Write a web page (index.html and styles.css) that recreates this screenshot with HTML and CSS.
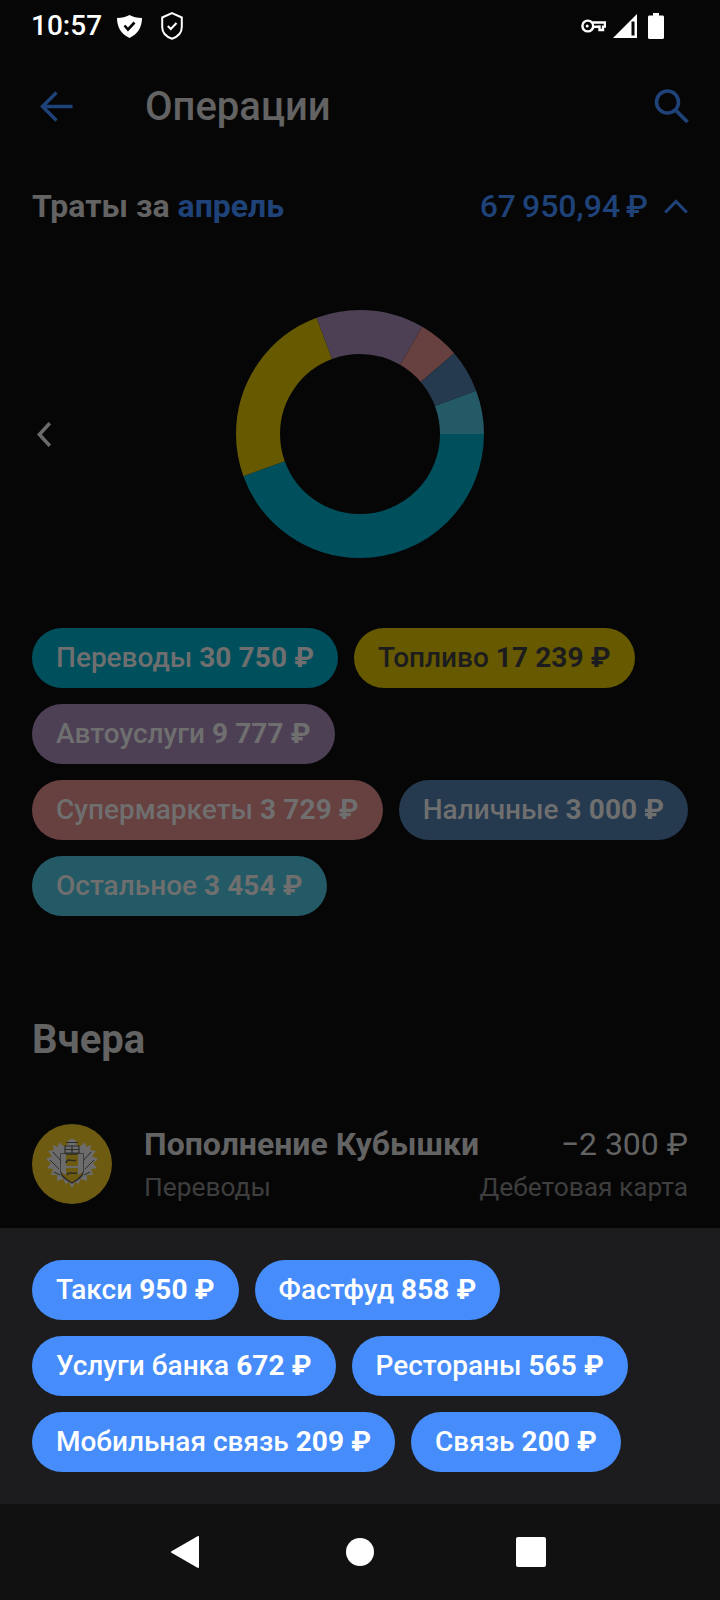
FILE: index.html
```html
<!DOCTYPE html>
<html lang="ru">
<head>
<meta charset="utf-8">
<title>Операции</title>
<link rel="stylesheet" href="styles.css">
</head>
<body>
<div class="screen">
  <main class="main">
    <div class="status">
      <div class="status-left">
        <span class="clock">10:57</span>
        <svg class="ic-shield-fill" viewBox="0 0 25 23"><path fill="#fff" fill-rule="evenodd" d="M12.5 0C16 2 20 3 25 3C25 12 21 19 12.5 23C4 19 0 12 0 3C5 3 9 2 12.5 0Z"/><path fill="none" stroke="#060606" stroke-width="2.6" d="M7.5 10.5L11 14.5L17.5 7.5"/></svg>
        <svg class="ic-shield-line" viewBox="0 0 22 28"><path fill="none" stroke="#fff" stroke-width="2" d="M11 1.2L20.8 5.5V15C20.8 21 16 25 11 26.8C6 25 1.2 21 1.2 15V5.5Z"/><path fill="none" stroke="#fff" stroke-width="2" d="M6.8 14L9.8 17L15.5 11"/></svg>
      </div>
      <div class="status-right">
        <svg class="ic-key" viewBox="0 0 25 14"><path fill="none" stroke="#fff" stroke-width="2.4" d="M11.5 3.5H24V7.6H22V11H18.5V7.6L12 8"/><circle cx="6.8" cy="7" r="5.4" fill="none" stroke="#fff" stroke-width="2.4"/><circle cx="6.2" cy="7" r="1.5" fill="#fff"/></svg>
        <svg class="ic-signal" viewBox="0 0 24 24"><path fill="#fff" d="M24 0V24H0Z"/><path fill="#060606" d="M18.5 7.5H21.5V21.5H18.5Z"/></svg>
        <svg class="ic-battery" viewBox="0 0 16 26"><path fill="#fff" d="M5 0H11V2.5H14.5C15.4 2.5 16 3.1 16 4V24.500C16 25.400 15.400 26 14.500 26H1.500C.6 26 0 25.400 0 24.500V4C0 3.100.6 2.500 1.500 2.500H5Z"/></svg>
      </div>
    </div>

    <header class="header">
      <svg class="ic-back" viewBox="0 0 33 31"><path fill="none" stroke="#1f4279" stroke-width="3.400" d="M32.500 15.500H3M16.500 1.500L2.500 15.500L16.500 29.500"/></svg>
      <h1 class="title">Операции</h1>
      <svg class="ic-search" viewBox="0 0 35 34"><circle cx="13.500" cy="13" r="11" fill="none" stroke="#1f4279" stroke-width="3.600"/><path stroke="#1f4279" stroke-width="3.800" d="M21.500 21L33.500 33"/></svg>
    </header>

    <div class="summary">
      <div class="summary-label">Траты за <span class="accent">апрель</span></div>
      <div class="summary-total">
        <span class="amount">67 950,94 ₽</span>
        <svg class="ic-up" viewBox="0 0 24 15"><path fill="none" stroke="#1f4279" stroke-width="3.200" d="M1.200 13.500L12 2.500L22.800 13.500"/></svg>
      </div>
    </div>

    <div class="chart-row">
      <svg class="ic-prev" viewBox="0 0 14 25"><path fill="none" stroke="#6a6a6a" stroke-width="3.600" d="M12.800 1.200L2.400 12.500L12.800 23.800"/></svg>
      <svg class="donut" viewBox="0 0 248 248">
        <circle class="seg" cx="124" cy="124" r="102" pathLength="360" stroke="#004f5d" stroke-dasharray="160.100 360"/>
        <circle class="seg" cx="124" cy="124" r="102" pathLength="360" stroke="#665900" stroke-dasharray="89.400 360" stroke-dashoffset="-160.100"/>
        <circle class="seg" cx="124" cy="124" r="102" pathLength="360" stroke="#4d4055" stroke-dasharray="50.700 360" stroke-dashoffset="-249.500"/>
        <circle class="seg" cx="124" cy="124" r="102" pathLength="360" stroke="#674040" stroke-dasharray="19.200 360" stroke-dashoffset="-300.200"/>
        <circle class="seg" cx="124" cy="124" r="102" pathLength="360" stroke="#253a4f" stroke-dasharray="20.100 360" stroke-dashoffset="-319.400"/>
        <circle class="seg" cx="124" cy="124" r="102" pathLength="360" stroke="#245a65" stroke-dasharray="20.500 360" stroke-dashoffset="-339.500"/>
      </svg>
    </div>

    <div class="chips chips-dim">
      <div class="chip c-teal">Переводы <b>30 750 ₽</b></div>
      <div class="chip c-yellow">Топливо <b>17 239 ₽</b></div>
      <div class="chip c-purple">Автоуслуги <b>9 777 ₽</b></div>
      <div class="chip c-red">Супермаркеты <b>3 729 ₽</b></div>
      <div class="chip c-navy">Наличные <b>3 000 ₽</b></div>
      <div class="chip c-sea">Остальное <b>3 454 ₽</b></div>
    </div>

    <h2 class="day">Вчера</h2>

    <div class="op">
      <div class="op-logo">
        <svg viewBox="0 0 54 50" class="crest">
          <path fill="#6c6c6c" d="M27 0C30 0 31.500 2 31 4.500L33 8L37 6L40 3L41 8L46 6L45 11L51 12L47 17L53 20L48 24L52 29L46 30L48 36L42 36L42 42L36 40L33 45L30 43L27 49L24 43L21 45L18 40L12 42L12 36L6 36L8 30L2 29L6 24L1 20L7 17L3 12L9 11L8 6L13 8L14 3L17 6L21 8L23 4.500C22.500 2 24 0 27 0Z"/>
          <path fill="none" stroke="#2c2c28" stroke-width="1" d="M8 13L16 22M46 13L38 22M5 21L14 30M49 21L40 30M9 33L15 36M45 33L39 36M21 3.500H33"/>
          <path fill="#6c6c6c" stroke="#2c2c28" stroke-width="1.200" d="M20 7H34V14H20Z"/>
          <path fill="none" stroke="#2c2c28" stroke-width="1.200" d="M27 7V14M20 10.500H34"/>
          <path fill="#6e5b12" stroke="#2c2c28" stroke-width="1.400" d="M16 15H38V33C38 38 32 41 27 44C22 41 16 38 16 33Z"/>
          <path fill="#6c6c6c" d="M16 15H21V36L16 33ZM33 15H38V33L33 36ZM16 27H38V29H16Z"/>
          <path fill="none" stroke="#2c2c28" stroke-width="1.600" d="M21 24C22 19 25 22 31 21.500M22 36C23 32 27 35 32 34"/>
        </svg>
      </div>
      <div class="op-body">
        <div class="op-line">
          <span class="op-name">Пополнение Кубышки</span>
          <span class="op-sum">−2 300 ₽</span>
        </div>
        <div class="op-line">
          <span class="op-sub">Переводы</span>
          <span class="op-sub">Дебетовая карта</span>
        </div>
      </div>
    </div>
  </main>

  <section class="sheet">
    <div class="chips">
      <div class="chip c-blue">Такси <b>950 ₽</b></div>
      <div class="chip c-blue">Фастфуд <b>858 ₽</b></div>
      <div class="chip c-blue">Услуги банка <b>672 ₽</b></div>
      <div class="chip c-blue">Рестораны <b>565 ₽</b></div>
      <div class="chip c-blue">Мобильная связь <b>209 ₽</b></div>
      <div class="chip c-blue">Связь <b>200 ₽</b></div>
    </div>
  </section>

  <nav class="nav">
    <svg class="nav-back" viewBox="0 0 28 32"><path fill="#fff" stroke="#fff" stroke-width="2" stroke-linejoin="round" d="M27 1V31L1 16Z"/></svg>
    <span class="nav-home"></span>
    <span class="nav-recent"></span>
  </nav>
</div>
</body>
</html>
```
FILE: styles.css
```css
* { box-sizing: border-box; }
html, body { margin: 0; padding: 0; background: #060606; }
body { font-family: Roboto, "Noto Sans", sans-serif; }

.screen { width: 720px; height: 1600px; display: flex; flex-direction: column; overflow: hidden; }
.main { flex: 1; min-height: 0; overflow: hidden; background: #060606; }

.status { height: 52px; padding: 0 32px 0 31px; display: flex; justify-content: space-between; align-items: center; }
.status-left { display: flex; align-items: center; }
.clock { font-size: 28px; font-weight: 500; color: #fff; line-height: 52px; width: 86px; }
.ic-shield-fill { width: 25px; height: 23px; }
.ic-shield-line { width: 22px; height: 28px; margin-left: 19px; }
.status-right { display: flex; align-items: center; }
.ic-key { width: 25px; height: 14px; }
.ic-signal { width: 24px; height: 24px; margin-left: 7px; }
.ic-battery { width: 16px; height: 26px; margin-left: 11px; margin-right: 24px; }

.header { height: 108px; padding: 0 31px 0 40px; display: flex; align-items: center; }
.ic-back { width: 33px; height: 31px; }
.title { flex: 1; margin: 0 0 0 72px; font-size: 40px; font-weight: 500; color: #636363; }
.ic-search { width: 35px; height: 34px; }

.summary { height: 92px; padding: 0 32px; display: flex; justify-content: space-between; align-items: center; }
.summary-label { font-size: 32px; font-weight: 700; color: #636363; }
.accent { color: #1f4279; }
.summary-total { display: flex; align-items: center; }
.amount { font-size: 32px; font-weight: 500; color: #1f4279; word-spacing: -2px; }
.ic-up { width: 24px; height: 15px; margin-left: 16px; }

.chart-row { height: 248px; margin-top: 58px; padding-left: 37px; display: grid; grid-template-columns: 14px 1fr; align-items: center; }
.ic-prev { width: 14px; height: 25px; }
.donut { width: 248px; height: 248px; margin-left: 185px; }
.seg { fill: none; stroke-width: 44; }

.chips { padding: 0 24px 0 32px; display: flex; flex-wrap: wrap; gap: 16px; }
.chips-dim { margin-top: 70px; }
.chip { height: 60px; padding: 0 24px 2px; border-radius: 30px; display: flex; align-items: center; white-space: pre; font-size: 28px; font-weight: 500; }
.chip b { font-weight: 700; letter-spacing: 0.1px; }
.c-teal { background: #004f5d; color: #6f6f6f; }
.c-yellow { background: #665900; color: #1c1c1e; }
.c-purple { background: #4d4055; color: #6f6f6f; }
.c-red { background: #674040; color: #6f6f6f; }
.c-navy { background: #253a4f; color: #6f6f6f; }
.c-sea { background: #245a65; color: #6f6f6f; }
.c-blue { background: #468dfb; color: #fff; }

.day { margin: 102px 0 0; padding: 0 32px; font-size: 40px; line-height: 44px; font-weight: 700; color: #636363; }

.op { margin-top: 61px; padding: 0 32px; display: flex; align-items: center; }
.op-logo { width: 80px; height: 80px; border-radius: 50%; background: #6e5b12; display: flex; align-items: center; justify-content: center; flex: none; }
.crest { width: 54px; height: 50px; }
.op-body { flex: 1; margin-left: 32px; padding-top: 3px; display: flex; flex-direction: column; gap: 7px; }
.op-line { display: flex; justify-content: space-between; align-items: center; }
.op-name { font-size: 32px; line-height: 36px; font-weight: 700; color: #636363; }
.op-sum { font-size: 32px; line-height: 36px; color: #636363; }
.op-sub { font-size: 26.3px; line-height: 36px; color: #3e3e3e; }

.sheet { flex: none; height: 276px; padding-top: 32px; background: #1c1c1e; }
.nav { flex: none; height: 96px; background: #111; display: flex; align-items: center; padding-left: 171px; }
.nav-back { width: 28px; height: 32px; }
.nav-home { width: 28px; height: 28px; border-radius: 50%; background: #fff; margin-left: 147px; }
.nav-recent { width: 30px; height: 30px; border-radius: 2px; background: #fff; margin-left: 142px; }
```
